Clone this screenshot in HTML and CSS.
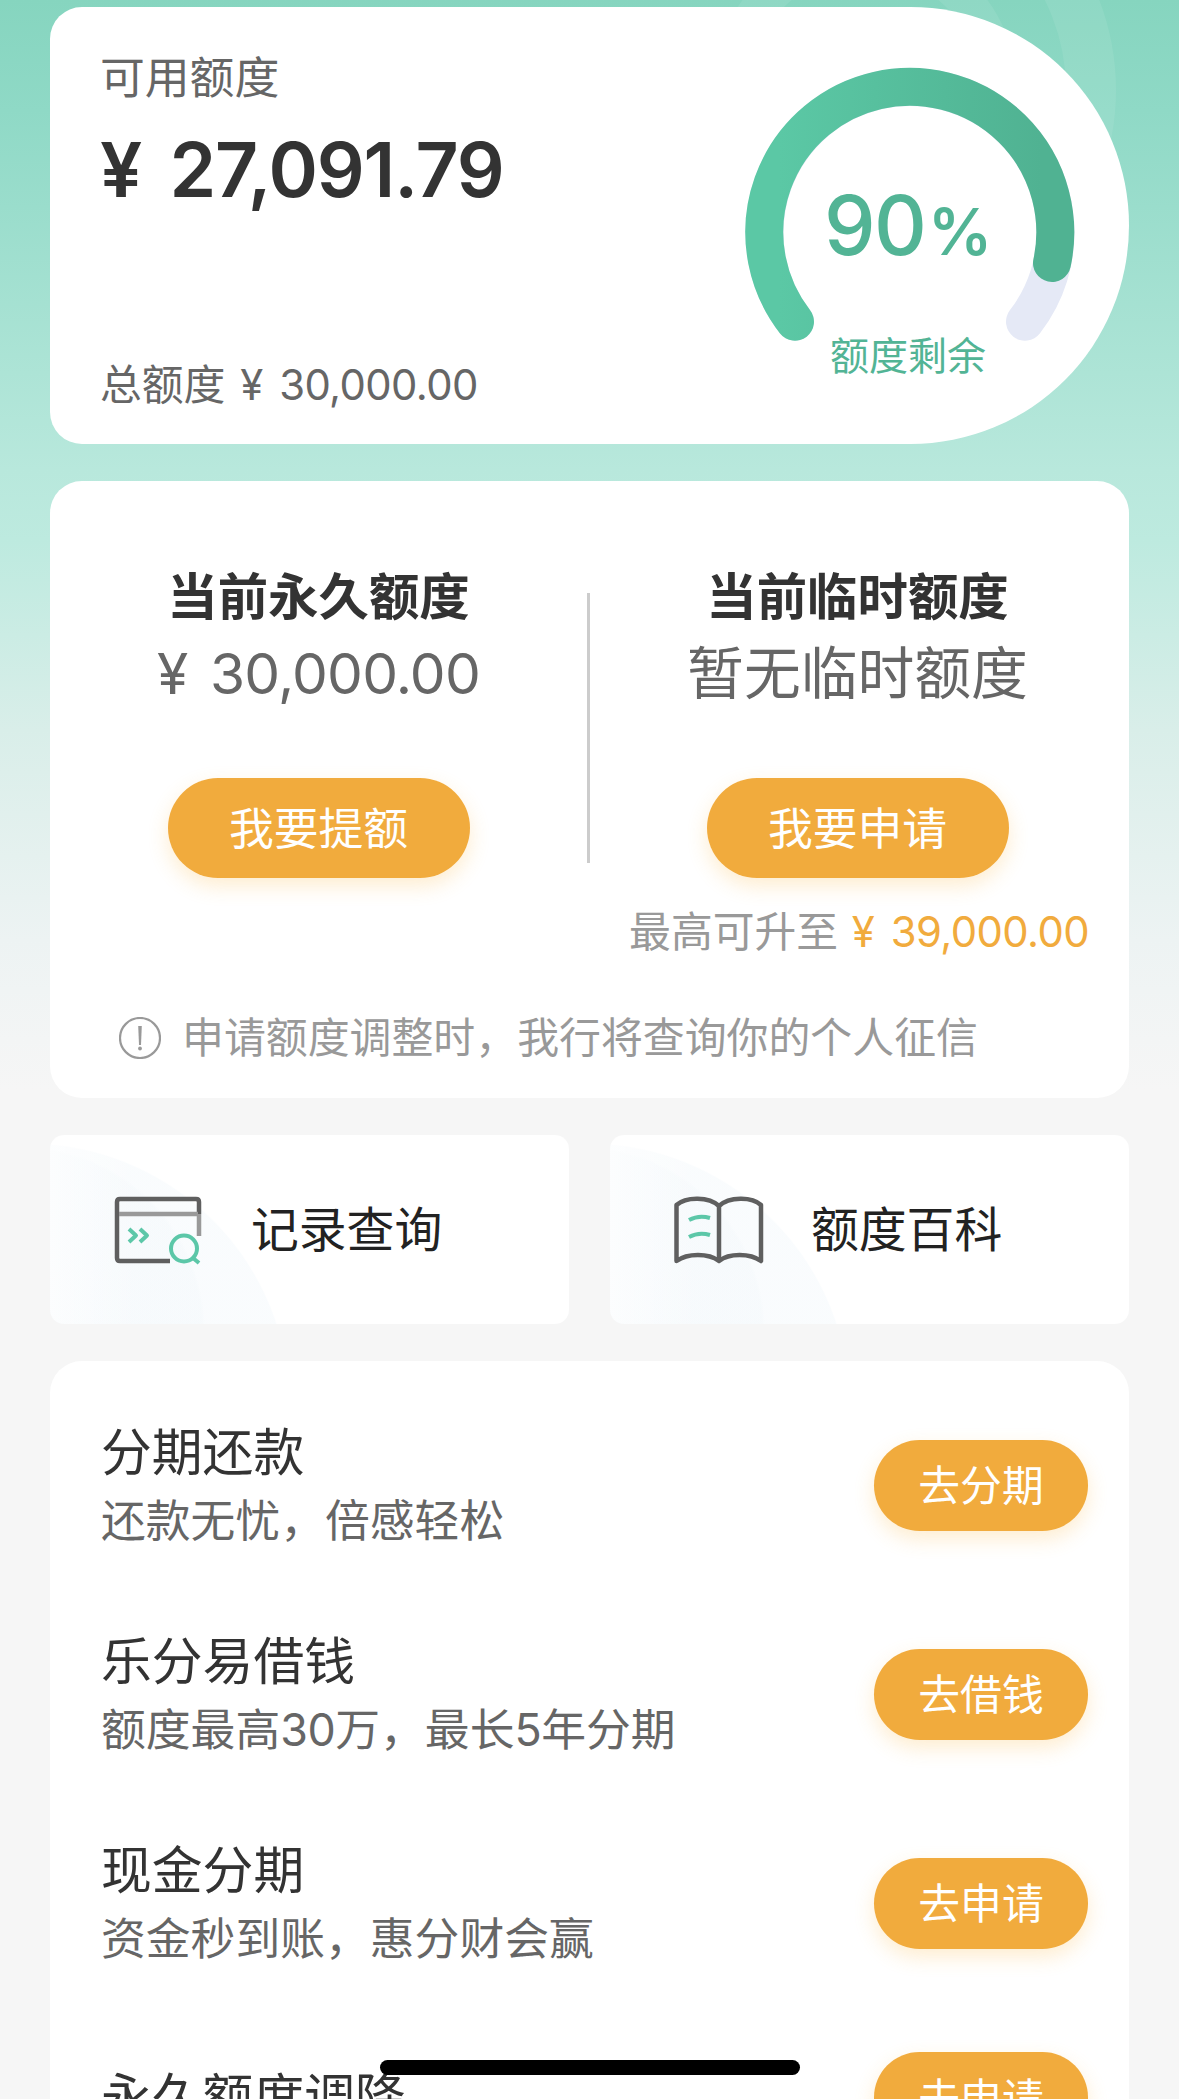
FILE: index.html
```html
<!DOCTYPE html>
<html lang="zh-CN">
<head>
<meta charset="utf-8">
<title>额度管理</title>
<link rel="stylesheet" href="styles.css">
</head>
<body>
<div class="page">
  <svg class="rings" width="417" height="350" viewBox="700 0 417 350">
    <circle cx="865" cy="90" r="226" stroke-width="50"/>
    <circle cx="865" cy="90" r="134" stroke-width="36"/>
  </svg>
  <main class="content">
    <section class="card quota">
      <div class="quota-info">
        <p class="quota-label">可用额度</p>
        <p class="quota-amount">¥ 27,091.79</p>
        <p class="quota-total">总额度 <span class="num">¥ 30,000.00</span></p>
      </div>
      <svg class="gauge" width="330" height="320" viewBox="745 60 330 320">
        <defs>
          <linearGradient id="arc" gradientUnits="userSpaceOnUse" x1="746" y1="0" x2="1074" y2="0">
            <stop offset="0.1" stop-color="#5bc8a5"/>
            <stop offset="0.9" stop-color="#50b292"/>
          </linearGradient>
        </defs>
        <path class="gauge-track" d="M795 321.7A145.5 145.5 0 1 1 1025 321.7"/>
        <path class="gauge-value" d="M795 321.7A145.5 145.5 0 1 1 1052 263"/>
        <text class="gauge-number" x="824" y="255">90</text>
        <text class="gauge-percent" x="928" y="255">%</text>
        <text class="gauge-caption" x="830" y="370">额度剩余</text>
      </svg>
    </section>

    <section class="card limits">
      <div class="limits-row">
        <div class="limit">
          <h2 class="limit-title">当前永久额度</h2>
          <p class="limit-value num">¥ 30,000.00</p>
          <button class="button button-large">我要提额</button>
        </div>
        <div class="divider"></div>
        <div class="limit">
          <h2 class="limit-title">当前临时额度</h2>
          <p class="limit-value">暂无临时额度</p>
          <button class="button button-large">我要申请</button>
        </div>
      </div>
      <p class="raise">最高可升至 <span class="num raise-amount">¥ 39,000.00</span></p>
      <p class="notice">
        <svg width="42" height="42" viewBox="0 0 42 42">
          <circle cx="21" cy="21" r="20"/>
          <path class="mark" d="M19.200 9h3.600l-0.800 19h-2z"/>
          <circle class="mark" cx="21" cy="31.500" r="1.900"/>
        </svg>
        <span>申请额度调整时，我行将查询你的个人征信</span>
      </p>
    </section>

    <nav class="links">
      <a class="link">
        <svg class="link-icon" width="92" height="72" viewBox="0 0 92 72">
          <path d="M5 20V8q0-3 3-3h76q3 0 3 3v12M5 20v44q0 3 3 3h50"/>
          <path class="soft" d="M7 20h79M87 20v22"/>
          <g class="accent">
            <path d="M17 35l7 6.500-7 6.500M28 35l7 6.500-7 6.500"/>
            <circle cx="72" cy="54.500" r="13"/>
            <path d="M81 64l6 5"/>
          </g>
        </svg>
        <span>记录查询</span>
      </a>
      <a class="link">
        <svg class="link-icon" width="92" height="72" viewBox="0 0 92 72">
          <path d="M47 12C37 2.500 14 2.500 4.500 11v56c11-8 32-8 42.500 0 10-8 31-8 42 0V11C80 2.500 57 2.500 47 12v55"/>
          <g class="accent">
            <path d="M17 26q10-5.500 21-2M17 43q10-5.500 21-2"/>
          </g>
        </svg>
        <span>额度百科</span>
      </a>
    </nav>

    <section class="card services">
      <div class="service">
        <div class="service-text">
          <h3 class="service-title">分期还款</h3>
          <p class="service-desc">还款无忧，倍感轻松</p>
        </div>
        <button class="button">去分期</button>
      </div>
      <div class="service">
        <div class="service-text">
          <h3 class="service-title">乐分易借钱</h3>
          <p class="service-desc">额度最高<span class="digits">30</span>万，最长<span class="digits">5</span>年分期</p>
        </div>
        <button class="button">去借钱</button>
      </div>
      <div class="service">
        <div class="service-text">
          <h3 class="service-title">现金分期</h3>
          <p class="service-desc">资金秒到账，惠分财会赢</p>
        </div>
        <button class="button">去申请</button>
      </div>
      <div class="service">
        <h3 class="service-title">永久额度调降</h3>
        <button class="button">去申请</button>
      </div>
    </section>
  </main>
  <div class="home-indicator"></div>
</div>
</body>
</html>
```

FILE: styles.css
```css
* {
  box-sizing: border-box;
  margin: 0;
  padding: 0;
}

body {
  font-family: Inter, "Noto Sans CJK SC", sans-serif;
  color: #333;
}

.page {
  position: relative;
  width: 1179px;
  height: 2099px;
  overflow: hidden;
  background: linear-gradient(#86d5bf 0, #8fd9c6 110px, #b8e8dc 470px, #bdeadf 540px, #d9eee9 730px, #edf3f3 940px, #f6f6f6 1090px);
}

.rings {
  position: absolute;
  left: 700px;
  top: 0;
  fill: none;
  stroke: rgba(255, 255, 255, 0.08);
}

.content {
  position: relative;
  display: flex;
  flex-direction: column;
  padding: 7px 50px 0;
}

.card {
  background: #fff;
  border-radius: 32px;
}

.num {
  letter-spacing: -0.014em;
  word-spacing: 0.13em;
}

.quota {
  display: flex;
  justify-content: space-between;
  height: 437px;
  padding: 46px 54px 0 50px;
  border-radius: 32px 218.5px 218.5px 32px;
}

.quota-label {
  font-size: 44.8px;
  line-height: 50px;
  color: #666;
}

.quota-amount {
  margin-top: 30px;
  font-size: 75px;
  font-weight: 600;
  line-height: 74px;
  letter-spacing: -0.015em;
  word-spacing: 0.14em;
}

.quota-total {
  margin-top: 157px;
  font-size: 41.8px;
  line-height: 42px;
  color: #666;
}

.quota-total .num {
  margin-left: 3px;
}

.gauge {
  margin-top: 7px;
}

.gauge-track,
.gauge-value {
  fill: none;
  stroke-width: 38px;
  stroke-linecap: round;
}

.gauge-track {
  stroke: #e5e9f6;
}

.gauge-value {
  stroke: url(#arc);
}

.gauge text {
  fill: #52b495;
}

.gauge-number {
  font-size: 82px;
  font-weight: 500;
  letter-spacing: -0.02em;
}

.gauge-percent {
  font-size: 64px;
  font-weight: 600;
}

.gauge-caption {
  font-size: 39px;
}

.limits {
  height: 617px;
  margin-top: 37px;
  padding: 90px 40px 0 0;
}

.limits-row {
  display: flex;
  margin-right: -39px;
}

.limit {
  display: flex;
  flex: 1;
  flex-direction: column;
  align-items: center;
}

.limit:first-child {
  flex: none;
  width: 537px;
}

.limit:last-child {
  margin-right: 3px;
}

.limit-title {
  font-size: 50.4px;
  font-weight: 700;
  line-height: 52px;
}

.limit-value {
  margin-top: 21px;
  font-size: 56.8px;
  line-height: 60px;
  color: #666;
}

.divider {
  width: 3px;
  height: 270px;
  margin-top: 22px;
  background: #ccc;
}

.button {
  width: 214px;
  height: 91px;
  padding-bottom: 4px;
  border: 0;
  border-radius: 50px;
  background: #f1ab3d;
  box-shadow: 0 8px 20px rgba(250, 180, 60, 0.24);
  font-family: inherit;
  font-size: 41.8px;
  color: #fff;
}

.button-large {
  width: 302px;
  height: 100px;
  margin-top: 74px;
  padding-bottom: 6px;
  font-size: 44.8px;
}

.raise {
  margin-top: 33px;
  font-size: 41.8px;
  line-height: 42px;
  text-align: right;
  color: #999;
}

.raise-amount {
  margin-left: 2px;
  color: #f1ab3d;
}

.notice {
  display: flex;
  align-items: center;
  gap: 21px;
  margin: 64px 0 0 69px;
  font-size: 41.9px;
  line-height: 42px;
  color: #999;
}

.notice svg {
  fill: none;
  stroke: #999;
  stroke-width: 2.2px;
}

.notice .mark {
  fill: #999;
  stroke: none;
}

.links {
  display: grid;
  grid-template-columns: 1fr 1fr;
  gap: 41px;
  margin-top: 37px;
}

.link {
  display: flex;
  align-items: center;
  gap: 47px;
  height: 189px;
  padding: 0 0 0 62px;
  border-radius: 14px;
  background:
    linear-gradient(to right, rgba(255, 255, 255, 0.6), rgba(255, 255, 255, 0) 90px),
    radial-gradient(circle 185px at -30px 196px, rgba(243, 248, 251, 0.4) 98.5%, transparent),
    radial-gradient(circle 262px at -22px 270px, rgba(248, 251, 253, 0.8) 99.5%, transparent),
    #fff;
  font-size: 47.8px;
  color: #222;
}

.link span {
  padding-bottom: 7px;
}

.link-icon {
  fill: none;
  stroke: #5f5f5f;
  stroke-width: 4.5px;
  stroke-linejoin: round;
}

.link-icon .soft {
  stroke: #999;
}

.link-icon .accent {
  stroke: #5cc7a8;
  stroke-width: 4px;
}

.services {
  display: flex;
  flex-direction: column;
  gap: 89px;
  margin-top: 37px;
  padding: 64px 41px 89px 51px;
}

.service {
  display: flex;
  align-items: center;
  justify-content: space-between;
}

.service-text {
  display: flex;
  flex-direction: column;
  gap: 21px;
  padding-top: 2px;
  padding-bottom: 1px;
}

.service-title {
  font-size: 50.8px;
  font-weight: 400;
  line-height: 51px;
}

.service-desc {
  font-size: 44.8px;
  line-height: 45px;
  color: #666;
}

.digits {
  letter-spacing: -0.01em;
}

.home-indicator {
  position: absolute;
  left: 380px;
  top: 2060px;
  width: 420px;
  height: 15px;
  border-radius: 8px;
  background: #000;
}
```
